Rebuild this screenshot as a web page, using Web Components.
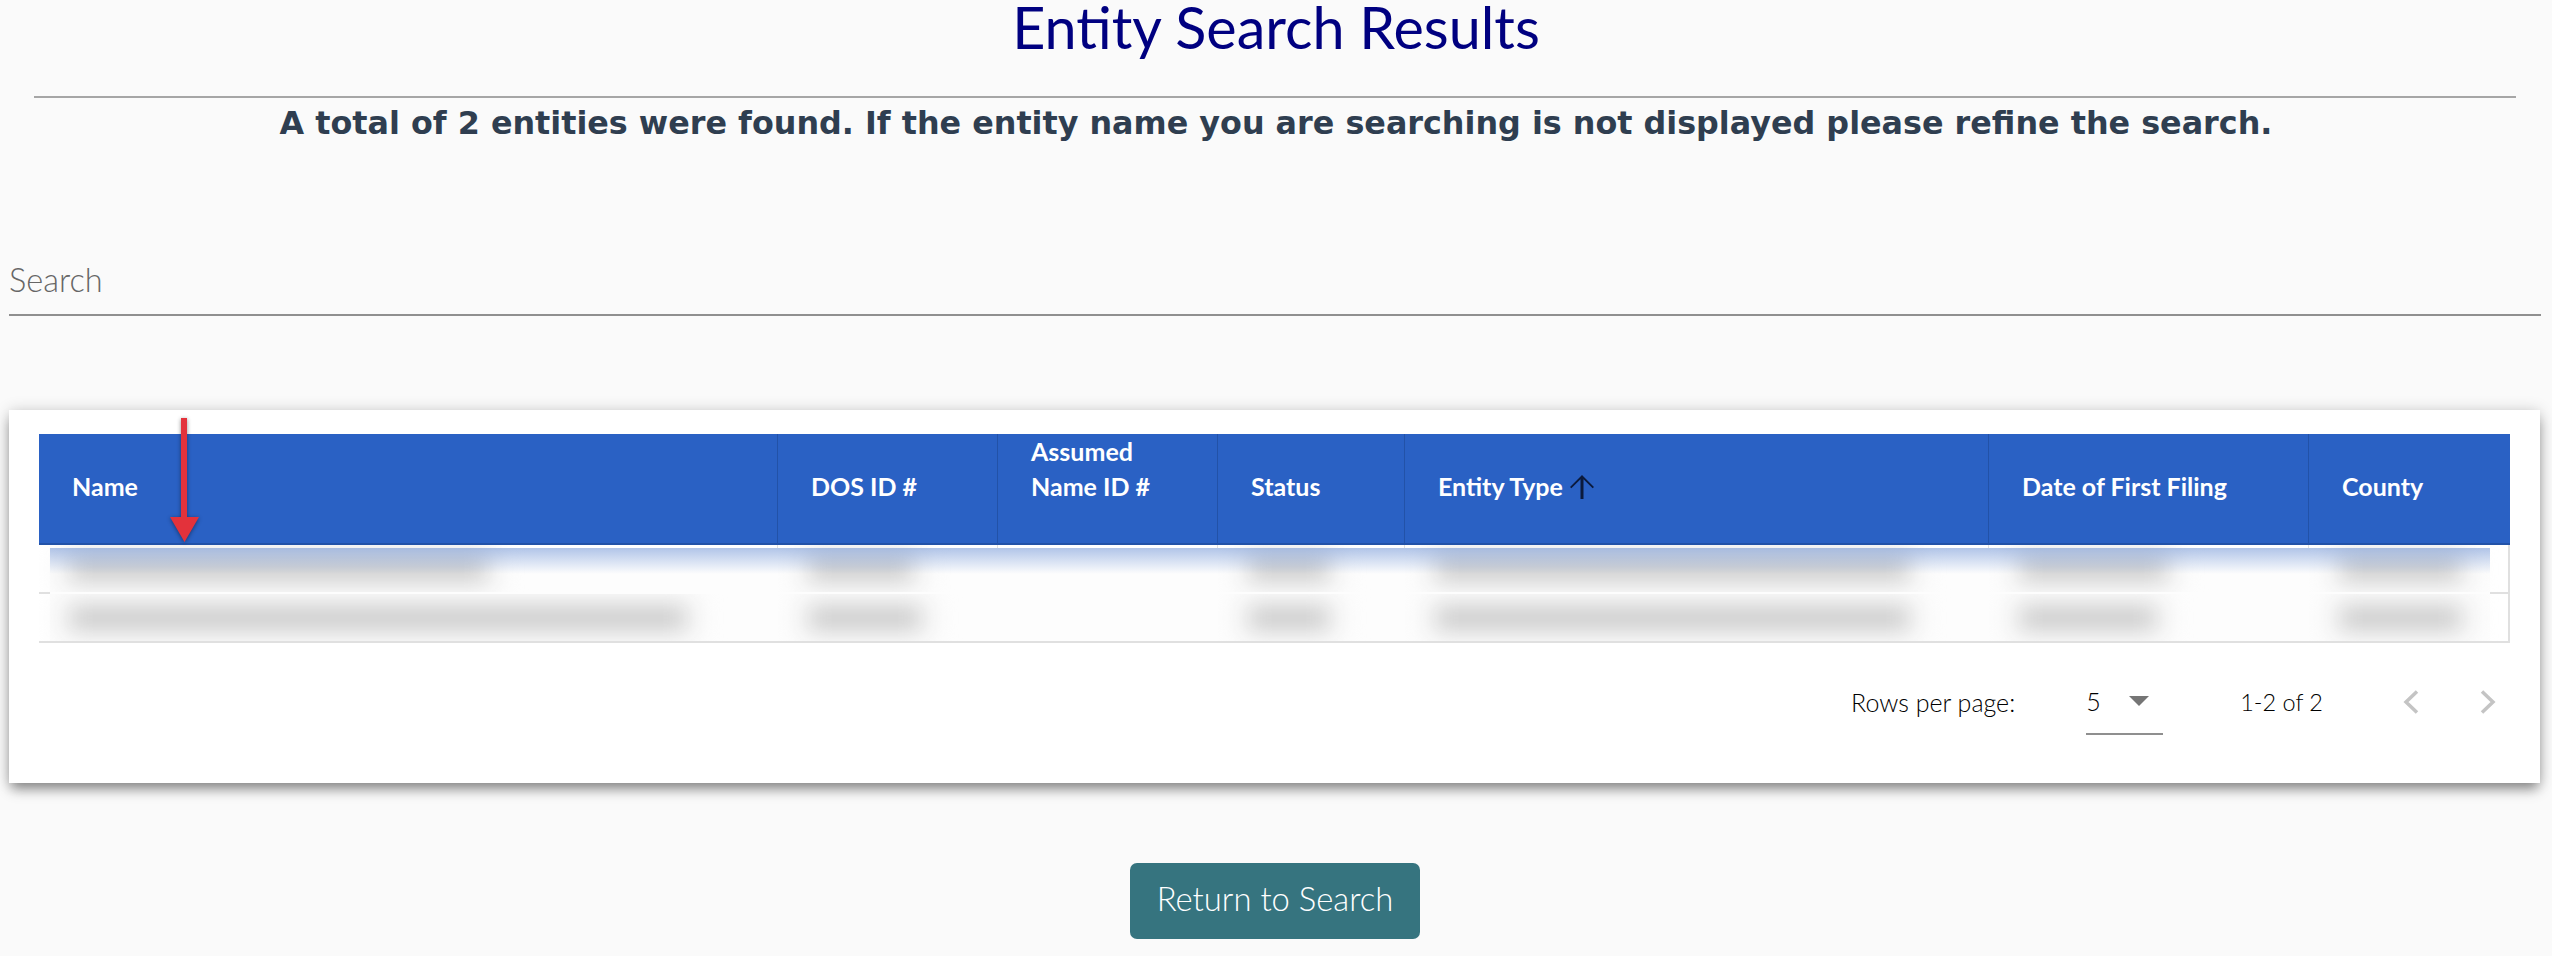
<!DOCTYPE html>
<html lang="en">
<head>
<meta charset="utf-8">
<title>Entity Search Results</title>
<style>
  html, body { margin: 0; background: #fafafa; font-family: Lato, "Open Sans", sans-serif; }
  body { display: flex; flex-direction: column; height: 956px; overflow: hidden; }
</style>
</head>
<body>
<results-heading heading="Entity Search Results">A total of 2 entities were found. If the entity name you are searching is not displayed please refine the search.</results-heading>
<search-field placeholder="Search"></search-field>
<results-card></results-card>
<return-button>Return to Search</return-button>

<script>
class ResultsHeading extends HTMLElement {
    connectedCallback() {
        this.attachShadow({ mode: 'open' });
        this.shadowRoot.innerHTML = `
            <style>
                :host { display: block; }
                h1 {
                    margin: 0;
                    height: 96px;
                    font: 400 57.500px/54px Lato, sans-serif;
                    color: #000080;
                    text-align: center;
                }
                hr {
                    margin: 0 36px 0 34px;
                    height: 2px;
                    border: 0;
                    background: #a6a6a6;
                }
                p {
                    margin: 0;
                    padding-top: 7px;
                    font: 700 31.800px/36px "DejaVu Sans", sans-serif;
                    color: #2f3e50;
                    text-align: center;
                }
            </style>
            <h1>${this.getAttribute('heading')}</h1>
            <hr>
            <p><slot></slot></p>
        `;
    }
}

class SearchField extends HTMLElement {
    connectedCallback() {
        this.attachShadow({ mode: 'open' });
        this.shadowRoot.innerHTML = `
            <style>
                :host { display: block; margin: 120px 11px 0 9px; }
                .field {
                    height: 55px;
                    box-sizing: border-box;
                    padding-top: 1px;
                    border-bottom: 2px solid #8f8f8f;
                    font: 300 32.500px/36px Lato, sans-serif;
                    color: #666;
                }
            </style>
            <div class="field">${this.getAttribute('placeholder')}</div>
        `;
    }
}

// cell contents are redacted in the source, so the rows only carry bar widths
const COLUMNS = [
    { label: 'Name', width: 739 },
    { label: 'DOS ID #', width: 220 },
    { label: 'Assumed<br>Name ID #', width: 220, twoLine: true },
    { label: 'Status', width: 187 },
    { label: 'Entity Type', width: 584, sorted: true },
    { label: 'Date of First Filing', width: 320 },
    { label: 'County', width: 201 }
];
const ROWS = [
    [413, 100, 0, 76, 469, 143, 117],
    [612, 108, 0, 76, 469, 132, 117]
];

class ResultsTable extends HTMLElement {
    connectedCallback() {
        this.attachShadow({ mode: 'open' });
        const arrow = `<svg class="sort" viewBox="4 4 16 16" width="24" height="24"><path fill="#0b1a3c" d="M4 12l.9.9L11 6.8V20h2V6.8l6.1 6.1.9-.9-8-8z"/></svg>`;
        this.shadowRoot.innerHTML = `
            <style>
                :host { display: block; position: relative; }
                table {
                    width: 2471px;
                    table-layout: fixed;
                    border-collapse: separate;
                    border-spacing: 0;
                }
                th {
                    height: 110px;
                    padding: 0 0 4px 33px;
                    box-sizing: border-box;
                    background: #2a61c4;
                    border-right: 1px solid #2252a8;
                    border-bottom: 2px solid #2252a8;
                    font: 700 25px/35px Lato, sans-serif;
                    color: #fff;
                    text-align: left;
                    vertical-align: middle;
                }
                th.two-line { padding-bottom: 39px; }
                th:last-child { border-right: 0; }
                th span { display: inline-flex; align-items: center; }
                th span.label { display: inline-block; }
                .sort { margin-left: 7px; }
                td {
                    height: 49px;
                    padding: 0 0 0 33px;
                    box-sizing: border-box;
                    overflow: hidden;
                    border-right: 1px solid #e0e0e0;
                    border-bottom: 2px solid #e0e0e0;
                }
                td:last-child { border-right: 2px solid #e0e0e0; }
                .bar {
                    display: block;
                    position: relative;
                    z-index: 2;
                    height: 20px;
                    background: #c8c8c8;
                    box-shadow: 0 0 12px 12px #f0f0f0;
                    filter: blur(11px);
                }
                .veil {
                    position: absolute;
                    z-index: 1;
                    left: 11px;
                    top: 114px;
                    width: 2440px;
                    height: 93px;
                    background: #fdfdfd;
                }
                .tint {
                    position: absolute;
                    z-index: 3;
                    left: 11px;
                    top: 114px;
                    width: 2440px;
                    height: 26px;
                    background: linear-gradient(rgba(42, 97, 196, .36), rgba(255, 255, 255, 0));
                }
                .pointer {
                    position: absolute;
                    z-index: 4;
                    left: 131px;
                    top: -16px;
                    filter: drop-shadow(0 1px 2px rgba(0, 0, 0, .45));
                }
            </style>
            <table>
                <colgroup>${COLUMNS.map(c => `<col style="width:${c.width}px">`).join('')}</colgroup>
                <thead><tr>${COLUMNS.map(c => `<th class="${c.twoLine ? 'two-line' : ''}"><span class="${c.twoLine ? 'label' : ''}">${c.label}${c.sorted ? arrow : ''}</span></th>`).join('')}</tr></thead>
                <tbody>${ROWS.map(r => `<tr>${r.map(w => `<td>${w ? `<i class="bar" style="width:${w}px"></i>` : ''}</td>`).join('')}</tr>`).join('')}</tbody>
            </table>
            <div class="veil"></div>
            <div class="tint"></div>
            <svg class="pointer" width="29" height="124" viewBox="0 0 29 124"><path fill="#e3323b" d="M11 0h6v99h12l-14.500 25L0 99h11z"/></svg>
        `;
    }
}

class TablePager extends HTMLElement {
    connectedCallback() {
        this.attachShadow({ mode: 'open' });
        this.shadowRoot.innerHTML = `
            <style>
                :host {
                    display: flex;
                    justify-content: flex-end;
                    align-items: center;
                    height: 117px;
                    padding-right: 14px;
                    font: 300 25px/28px Lato, sans-serif;
                    color: #000;
                }
                .select {
                    display: flex;
                    align-items: center;
                    box-sizing: border-box;
                    width: 77px;
                    height: 66px;
                    margin: 0 77px 0 71px;
                    border-bottom: 2px solid #8f8f8f;
                }
                .select svg { margin-left: 28px; }
                .range { font-size: 23.500px; }
                .chevrons { display: flex; gap: 61px; margin-left: 80px; }
            </style>
            <span>Rows per page:</span>
            <div class="select"><span>5</span>
                <svg width="20" height="10" viewBox="0 0 20 10"><path fill="#757575" d="M0 0h20L10 10z"/></svg>
            </div>
            <span class="range">1-2 of 2</span>
            <div class="chevrons">
                <svg width="16" height="24" viewBox="0 0 16 24"><path fill="none" stroke="#c4c4c4" stroke-width="3.500" d="M14 1.500 3 12l11 10.500"/></svg>
                <svg width="16" height="24" viewBox="0 0 16 24"><path fill="none" stroke="#c4c4c4" stroke-width="3.500" d="M2 1.500 13 12 2 22.500"/></svg>
            </div>
        `;
    }
}

class ResultsCard extends HTMLElement {
    connectedCallback() {
        this.attachShadow({ mode: 'open' });
        this.shadowRoot.innerHTML = `
            <style>
                :host {
                    display: block;
                    box-sizing: border-box;
                    width: 2531px;
                    height: 373px;
                    margin: 94px 0 0 9px;
                    padding: 24px 30px 0;
                    background: #fff;
                    box-shadow: 0 8px 12px -2px rgba(0, 0, 0, .42), 0 0 14px rgba(0, 0, 0, .16);
                }
            </style>
            <results-table></results-table>
            <table-pager></table-pager>
        `;
    }
}

class ReturnButton extends HTMLElement {
    connectedCallback() {
        this.attachShadow({ mode: 'open' });
        this.shadowRoot.innerHTML = `
            <style>
                :host { display: flex; justify-content: center; margin: 80px 2px 0 0; }
                button {
                    width: 290px;
                    height: 76px;
                    padding: 0 0 4px;
                    border: 0;
                    border-radius: 7px;
                    background: #36747f;
                    font: 300 32.800px/40px Lato, sans-serif;
                    color: #fff;
                }
            </style>
            <button><slot></slot></button>
        `;
    }
}

customElements.define('results-heading', ResultsHeading);
customElements.define('search-field', SearchField);
customElements.define('results-table', ResultsTable);
customElements.define('table-pager', TablePager);
customElements.define('results-card', ResultsCard);
customElements.define('return-button', ReturnButton);
</script>
</body>
</html>
